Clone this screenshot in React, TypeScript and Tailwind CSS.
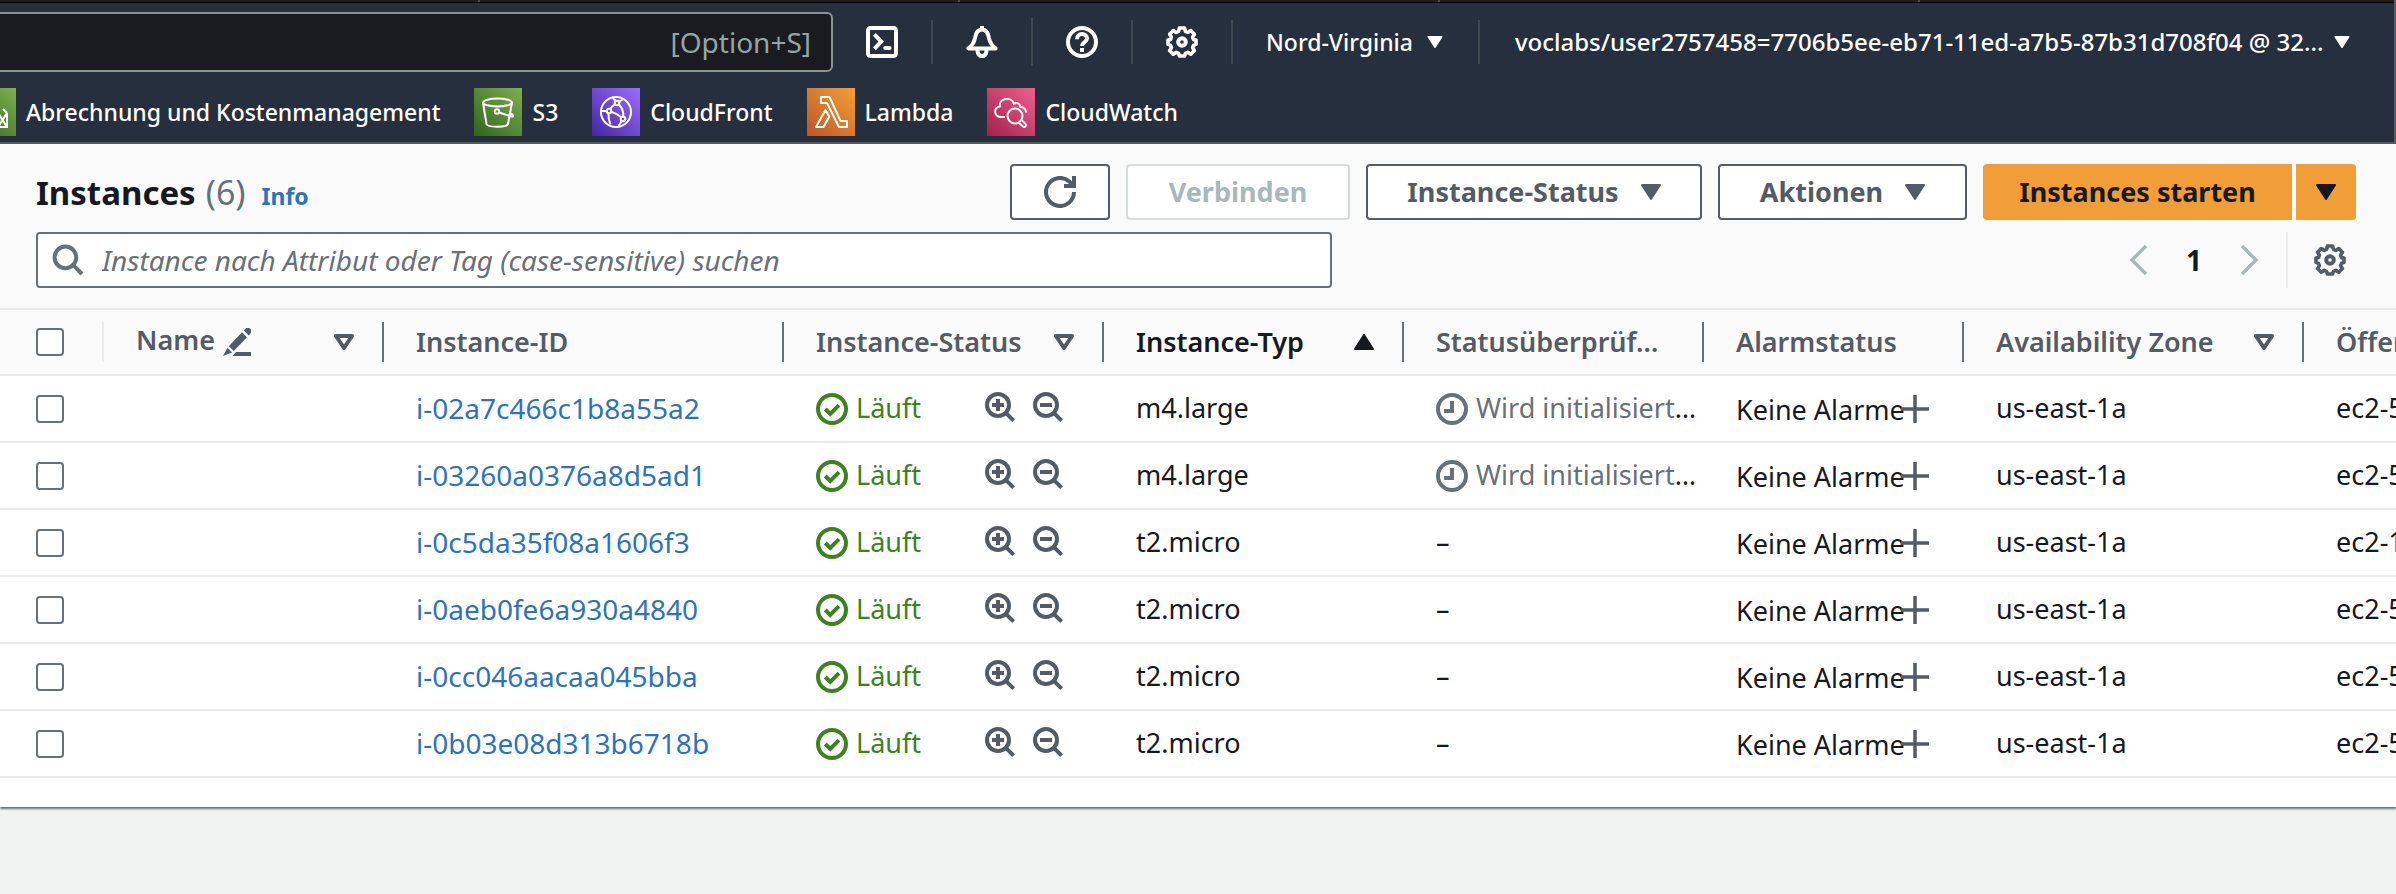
import React from "react";

type IconProps = { className?: string };

const stroke = {
  viewBox: "0 0 16 16",
  fill: "none",
  stroke: "currentColor",
  strokeWidth: 2,
  "aria-hidden": true,
} as const;

function TerminalIcon() {
  return (
    <svg {...stroke} className="size-8 shrink-0">
      <rect x="1" y="1" width="14" height="14" rx="1.2" />
      <path d="M4.2 4.2 7.6 7.8 4.2 11.4" />
      <path d="M9.6 11h2.200" strokeLinecap="round" />
    </svg>
  );
}

function BellIcon() {
  return (
    <svg {...stroke} className="size-8 shrink-0">
      <path d="M1.2 11.2h13.6c-2.4-1.8-2.9-3.1-3.3-5.2C11.100 3.400 10 1.700 8 1.700S4.900 3.400 4.500 6C4.100 8.100 3.600 9.400 1.200 11.200Z" strokeLinejoin="round" />
      <path d="M8 0v2" />
      <path d="M5.800 12v.8a2.200 2.200 0 0 0 4.400 0V12" />
    </svg>
  );
}

function HelpIcon() {
  return (
    <svg {...stroke} className="size-8 shrink-0">
      <circle cx="8" cy="8" r="7" />
      <path d="M5.500 6.600C5.500 4.900 6.600 4 8 4s2.500.9 2.500 2.300C10.500 8.100 8 8 8 10" />
      <path d="M8 11v2" />
    </svg>
  );
}

function GearIcon() {
  return (
    <svg {...stroke} className="size-8 shrink-0">
      <path
        d="M6.700 1h2.600l.4 1.700 1.200.5 1.500-.9 1.800 1.800-.9 1.500.5 1.200 1.200.2v2.200l-1.200.4-.5 1.200.9 1.500-1.800 1.800-1.500-.9-1.200.5L9.300 15H6.700l-.4-1.300-1.200-.5-1.500.9-1.800-1.800.9-1.500-.5-1.200L1 9.200V7l1.200-.2.5-1.200-.9-1.500 1.800-1.800 1.500.9 1.200-.5Z"
        strokeLinejoin="round"
        strokeWidth="1.8"
      />
      <circle cx="8" cy="8" r="1.900" />
    </svg>
  );
}

function SearchIcon() {
  return (
    <svg {...stroke} className="size-8 shrink-0">
      <circle cx="6.700" cy="6.700" r="5.400" />
      <path d="m10.600 10.600 4.400 4.400" />
    </svg>
  );
}

function ZoomIcon({ plus }: { plus?: boolean }) {
  return (
    <svg {...stroke} className="size-8 shrink-0">
      <circle cx="7" cy="7" r="5.500" />
      <path d="m10.900 10.900 3.900 3.900M4 7h6" />
      {plus && <path d="M7 4v6" />}
    </svg>
  );
}

function RefreshIcon() {
  return (
    <svg {...stroke} className="size-8 shrink-0">
      <path d="M15 8a7 7 0 1 1-2.300-5.200L15 5" />
      <path d="M15 0v5h-5" />
    </svg>
  );
}

function CheckIcon() {
  return (
    <svg {...stroke} className="size-8 shrink-0">
      <circle cx="8" cy="8" r="7" />
      <path d="m4.600 8 2.500 2.500 4.400-4.400" />
    </svg>
  );
}

function ClockIcon() {
  return (
    <svg {...stroke} className="size-8 shrink-0">
      <circle cx="8" cy="8" r="7" />
      <path d="M8 4v5H4" />
    </svg>
  );
}

function PlusIcon() {
  return (
    <svg {...stroke} className="size-7 shrink-0 text-[#545b64]">
      <path d="M8 0v16M0 8h16" />
    </svg>
  );
}

function EditIcon() {
  return (
    <svg viewBox="0 0 28 28" fill="currentColor" aria-hidden className="size-7 shrink-0">
      <path d="M22.200.9a3.500 3.500 0 0 1 5 4.900l-1.400 1.600-5-4.900ZM19 4.300l5 4.900L10.800 23l-5-4.800ZM4.400 19.700l4.700 4.700L0 28ZM13 24h15v4H9.500Z" />
    </svg>
  );
}

function Chevron({ right }: { right?: boolean }) {
  return (
    <svg viewBox="0 0 20 32" fill="none" stroke="currentColor" strokeWidth="3.500" aria-hidden className="h-8 w-5">
      <path d={right ? "m2 2 14 14L2 30" : "M18 2 4 16l14 14"} />
    </svg>
  );
}

function Caret({ className }: IconProps) {
  return (
    <svg viewBox="0 0 20 16" fill="currentColor" stroke="currentColor" strokeWidth="2" strokeLinejoin="round" aria-hidden className={className}>
      <path d="M1 1h18l-9 14Z" />
    </svg>
  );
}

function SortIcon({ active }: { active?: boolean }) {
  return (
    <svg viewBox="0 0 20 16" stroke="currentColor" aria-hidden className="h-4 w-5 shrink-0" strokeLinejoin="round">
      {active ? (
        <path d="M1 15h18L10 1Z" fill="currentColor" strokeWidth="2" />
      ) : (
        <path d="M2 2h16l-8 12Z" fill="none" strokeWidth="4" />
      )}
    </svg>
  );
}

const art = { viewBox: "0 0 48 48", fill: "none", stroke: "white", strokeWidth: 2, "aria-hidden": true } as const;

function BillingArt() {
  return (
    <svg {...art} className="size-12">
      <path d="M39 25v14H12V25M30 39l9-14M30 25l9 14M35 21l4 4" />
      <circle cx="24" cy="16" r="7" />
    </svg>
  );
}

function BucketArt() {
  return (
    <svg {...art} className="size-12">
      <ellipse cx="23.500" cy="14.500" rx="14.500" ry="4" />
      <path d="M9 14.500 12.500 36c.4 3.600 20.800 3.600 21.500 0L38 14.500" />
      <circle cx="23" cy="23.500" r="2.200" />
      <path d="m25 24.500 11.500 3.700c1.800.6 3 .2 2.600-.6-.3-.7-1-1.200-2.100-1.900" />
    </svg>
  );
}

function GlobeArt() {
  return (
    <svg {...art} className="size-12">
      <circle cx="24" cy="24" r="15" />
      <circle cx="25" cy="15" r="2.300" />
      <circle cx="17" cy="23" r="2.300" />
      <circle cx="31" cy="31" r="2.300" />
      <path d="M18.500 20.500c1-1.700 2.500-3 4.300-4M27 16.500c3 3.300 4.500 7.500 4.400 12M19.500 24c3.300.9 6.500 2.600 9.500 5M9.500 23H14M16.500 25.500c-.3 4 .5 7.500 2 11M29.500 33.500l-3 4.500M21 10l2.500 3M27.500 13.500l3-2" />
    </svg>
  );
}

function LambdaArt() {
  return (
    <svg {...art} className="size-12">
      <path d="M14 9h8.500l11 24H40v6h-8L20 15h-6ZM18.500 22l3.800 6.500L16.500 39H9Z" strokeLinejoin="round" />
    </svg>
  );
}

function CloudWatchArt() {
  return (
    <svg {...art} className="size-12">
      <path d="M18 29h-4c-7.500-.5-7.500-9.500-1.200-10.500-1-8.500 11.500-10.500 14.200-2.700 2.800-2 6.200-.3 6.300 3 3.500.5 5.500 2.500 5.900 5.700" />
      <circle cx="28" cy="28" r="7.500" />
      <path d="m31.500 34.500 4.500 4c2 1.500 4-.8 2.500-2.600L34 31.500" />
    </svg>
  );
}

const favourites = [
  { label: "Abrechnung und Kostenmanagement", tile: "bg-linear-to-tr from-[#2f6420] to-[#7fb050]", Art: BillingArt },
  { label: "S3", tile: "bg-linear-to-tr from-[#2f6420] to-[#7fb050]", Art: BucketArt },
  { label: "CloudFront", tile: "bg-linear-to-tr from-[#4527a0] to-[#a06bff]", Art: GlobeArt },
  { label: "Lambda", tile: "bg-linear-to-tr from-[#bd5429] to-[#f3a036]", Art: LambdaArt },
  { label: "CloudWatch", tile: "bg-linear-to-tr from-[#a01f4e] to-[#f0608f]", Art: CloudWatchArt },
];

const instances = [
  { id: "i-02a7c466c1b8a55a2", type: "m4.large", pending: true, dns: "ec2-5" },
  { id: "i-03260a0376a8d5ad1", type: "m4.large", pending: true, dns: "ec2-5" },
  { id: "i-0c5da35f08a1606f3", type: "t2.micro", pending: false, dns: "ec2-1" },
  { id: "i-0aeb0fe6a930a4840", type: "t2.micro", pending: false, dns: "ec2-5" },
  { id: "i-0cc046aacaa045bba", type: "t2.micro", pending: false, dns: "ec2-5" },
  { id: "i-0b03e08d313b6718b", type: "t2.micro", pending: false, dns: "ec2-5" },
];

function Divider({ tall }: { tall?: boolean }) {
  return <span className={tall ? "h-12 w-0.5 bg-[#414750]" : "h-11 w-0.5 bg-[#414750]"} />;
}

function TopNav() {
  return (
    <header className="border-r-2 border-b-2 border-[#545b64] bg-[#262f3e] text-white">
      <div className="flex h-0.5 overflow-hidden bg-[#1f1f1f]">
        {[0, 1, 2, 3].map((n) => (
          <span key={n} className="w-[480px] shrink-0 border-r-2 border-[#4a4a4a]" />
        ))}
      </div>
      <div className="h-px bg-black" />
      <div className="flex h-[78px] items-center">
        <input
          aria-label="Suchen"
          placeholder="[Option+S]"
          className="h-[60px] w-[833px] rounded-r-md border-2 border-l-0 border-[#879596] bg-[#1a1b1f] pr-5 text-right text-[28px] text-white placeholder:text-[#95a5a6]"
        />
        <nav className="flex flex-1 items-center">
          <button aria-label="CloudShell" className="ml-[33px]"><TerminalIcon /></button>
          <span className="flex w-[68px] justify-center"><Divider /></span>
          <button aria-label="Benachrichtigungen"><BellIcon /></button>
          <span className="flex w-[68px] justify-center"><Divider tall /></span>
          <button aria-label="Hilfe"><HelpIcon /></button>
          <span className="flex w-[68px] justify-center"><Divider /></span>
          <button aria-label="Einstellungen"><GearIcon /></button>
          <span className="flex w-[68px] justify-center"><Divider /></span>
          <button className="flex items-center gap-3.5 text-[23px] font-medium">
            Nord-Virginia
            <Caret className="h-3 w-4" />
          </button>
          <span className="flex w-[72px] justify-center"><Divider /></span>
          <button className="flex items-center gap-2.5 text-[24px] font-medium whitespace-nowrap">
            voclabs/user2757458=7706b5ee-eb71-11ed-a7b5-87b31d708f04 @ 32...
            <Caret className="h-3 w-4" />
          </button>
        </nav>
      </div>
      <nav className="-ml-8 flex items-center gap-[34px] pt-[7px] pb-1.5" aria-label="Favoriten">
        {favourites.map(({ label, tile, Art }) => (
          <a key={label} href="#" className="flex items-center gap-2.5 text-[23px] font-medium whitespace-nowrap">
            <span className={`size-12 ${tile}`}><Art /></span>
            {label}
          </a>
        ))}
      </nav>
    </header>
  );
}

function Toolbar() {
  const base = "flex h-14 items-center justify-center rounded border-2 text-[27px] font-bold";
  return (
    <div className="bg-[#fafafa] pt-5 pr-10 pb-5 pl-9">
      <div className="flex h-14 items-center justify-between">
        <h1 className="flex items-baseline text-[33px] font-bold text-[#16191f]">
          Instances
          <span className="ml-2.5 text-[34px] font-normal text-[#687078]">(6)</span>
          <a href="#" className="ml-4 text-[23px] text-[#2e73b8]">Info</a>
        </h1>
        <div className="flex gap-4 text-[#545b64]">
          <button aria-label="Aktualisieren" className={`${base} w-[100px] border-[#545b64] bg-white`}><RefreshIcon /></button>
          <button disabled className={`${base} w-[224px] border-[#d5dbdb] bg-white text-[#aab7b8]`}>Verbinden</button>
          <button className={`${base} w-[336px] gap-[22px] border-[#545b64] bg-white`}>Instance-Status<Caret className="h-4 w-5" /></button>
          <button className={`${base} w-[249px] gap-[22px] border-[#545b64] bg-white`}>Aktionen<Caret className="h-4 w-5" /></button>
          <div className="flex gap-1 text-[#16191f]">
            <button className="h-14 w-[309px] rounded-l bg-[#f19e38] text-[27px] font-bold">Instances starten</button>
            <button aria-label="Weitere Startoptionen" className="flex h-14 w-[60px] items-center justify-center rounded-r bg-[#f19e38]"><Caret className="h-4 w-5" /></button>
          </div>
        </div>
      </div>
      <div className="mt-3 flex items-center justify-between">
        <label className="flex h-14 w-[1296px] items-center gap-[18px] rounded border-2 border-[#687078] bg-white pl-3.5 text-[#687078]">
          <SearchIcon />
          <input
            aria-label="Instanzen suchen"
            placeholder="Instance nach Attribut oder Tag (case-sensitive) suchen"
            className="flex-1 bg-transparent text-[28px] italic outline-none placeholder:text-[#687078]"
          />
        </label>
        <div className="flex items-center text-[#545b64]">
          <button aria-label="Vorherige Seite" className="text-[#aab7b8]"><Chevron /></button>
          <button className="w-[92px] text-center text-[28px] font-bold text-[#16191f]">1</button>
          <button aria-label="Nächste Seite" className="text-[#aab7b8]"><Chevron right /></button>
          <span className="mx-[26px] h-14 w-0.5 bg-[#eaeded]" />
          <button aria-label="Tabelleneinstellungen" className="mr-2.5"><GearIcon /></button>
        </div>
      </div>
    </div>
  );
}

function Check({ label }: { label: string }) {
  return (
    <input type="checkbox" aria-label={label} className="block size-7 appearance-none rounded border-2 border-[#687078] bg-white checked:bg-[#2e73b8]" />
  );
}

const columns: { label: string; sort?: "none" | "asc"; edit?: boolean }[] = [
  { label: "Name", sort: "none", edit: true },
  { label: "Instance-ID" },
  { label: "Instance-Status", sort: "none" },
  { label: "Instance-Typ", sort: "asc" },
  { label: "Statusüberprüf…" },
  { label: "Alarmstatus" },
  { label: "Availability Zone", sort: "none" },
  { label: "Öffentlich" },
];

const cell = "h-[67px] border-b-2 border-[#ebebeb] py-0 pr-0 pl-8";

function InstanceTable() {
  return (
    <div className="overflow-hidden">
      <table className="w-[2604px] table-fixed border-separate border-spacing-0 text-left text-[27px] whitespace-nowrap">
        <colgroup>
          <col className="w-[104px]" />
          <col className="w-[280px]" />
          <col className="w-[400px]" />
          <col className="w-[320px]" />
          <col className="w-[300px]" />
          <col className="w-[300px]" />
          <col className="w-[260px]" />
          <col className="w-[340px]" />
          <col className="w-[300px]" />
        </colgroup>
        <thead className="bg-[#fafafa] text-[#545b64]">
          <tr>
            <th className="h-[68px] border-y-2 border-[#ebebeb] p-0">
              <div className="flex h-10 items-center border-r-2 border-[#ebebeb] pl-9"><Check label="Alle auswählen" /></div>
            </th>
            {columns.map(({ label, sort, edit }) => (
              <th key={label} className="h-[68px] border-y-2 border-[#ebebeb] p-0 font-semibold">
                <div className={`flex h-10 items-center justify-between border-r-2 border-[#687078] pr-7 pl-8 ${sort === "asc" ? "text-[#16191f]" : ""}`}>
                  {edit ? (
                    <span className="flex items-center gap-2"><span className="pb-1">{label}</span><EditIcon /></span>
                  ) : (
                    label
                  )}
                  {sort && <SortIcon active={sort === "asc"} />}
                </div>
              </th>
            ))}
          </tr>
        </thead>
        <tbody className="bg-white text-[#16191f]">
          {instances.map((row) => (
            <tr key={row.id}>
              <td className="h-[67px] border-b-2 border-[#ebebeb] py-0 pr-0 pl-9"><Check label={row.id} /></td>
              <td className={cell} />
              <td className={cell}><a href="#" className="text-[28px] text-[#2e73b8]">{row.id}</a></td>
              <td className={cell}>
                <div className="flex items-center">
                  <span className="flex w-[168px] items-center gap-2 text-[#3d8121]"><CheckIcon />Läuft</span>
                  <span className="flex gap-4 pb-1 text-[#545b64]">
                    <button aria-label="Nach Status filtern"><ZoomIcon plus /></button>
                    <button aria-label="Status ausschließen"><ZoomIcon /></button>
                  </span>
                </div>
              </td>
              <td className={cell}>{row.type}</td>
              <td className={cell}>
                {row.pending ? (
                  <span className="flex items-center">
                    <span className="flex items-center gap-2 text-[#687078]"><ClockIcon />Wird initialisiert</span>…
                  </span>
                ) : (
                  "–"
                )}
              </td>
              <td className={cell}>
                <span className="flex items-center">
                  <span className="pt-1">Keine Alarme</span>
                  <button aria-label="Alarm hinzufügen" className="-ml-1"><PlusIcon /></button>
                </span>
              </td>
              <td className={cell}>us-east-1a</td>
              <td className={cell}>{row.dns}</td>
            </tr>
          ))}
        </tbody>
      </table>
    </div>
  );
}

export default function App() {
  return (
    <div className="min-h-screen overflow-hidden bg-[#f1f3f3] font-['Noto_Sans',sans-serif]">
      <TopNav />
      <main className="bg-white pb-[29px] shadow-[0_2px_2px_rgba(0,28,36,0.6)]">
        <Toolbar />
        <InstanceTable />
      </main>
    </div>
  );
}
